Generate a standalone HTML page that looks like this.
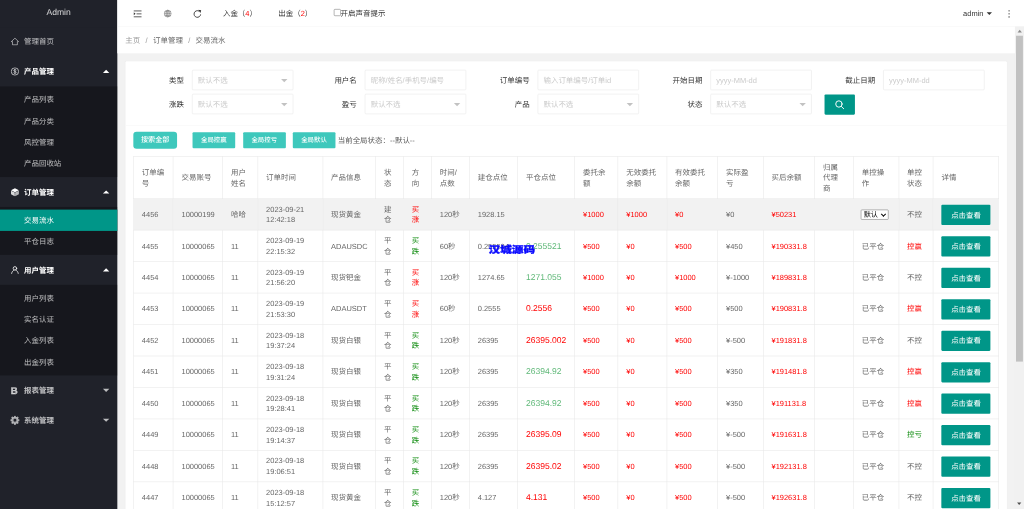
<!DOCTYPE html>
<html lang="zh-CN">
<head>
<meta charset="utf-8">
<title>Admin</title>
<style>
*{box-sizing:border-box}
html,body{margin:0;padding:0;width:1024px;height:509px;overflow:hidden;background:#fff}
#root{position:absolute;left:0;top:0;width:1920px;height:955px;transform:scale(.5333333);transform-origin:0 0;mix-blend-mode:multiply;overflow:hidden;background:#f2f2f2;
 font:14px/20px "Liberation Sans","Noto Sans CJK SC",sans-serif;color:#666;text-rendering:geometricPrecision;-webkit-font-smoothing:antialiased}
/* ---------- sidebar ---------- */
#side{position:absolute;left:0;top:0;width:220px;height:955px;background:#20222a;color:#fff}
#logo{height:50px;line-height:50px;padding-top:0;text-align:center;font-size:16px;font-weight:300;color:rgba(255,255,255,.8);box-shadow:0 1px 2px 0 rgba(0,0,0,.15)}
.ni{position:relative;height:56px;line-height:56px;padding-left:45px;color:rgba(255,255,255,.7)}
.ni.on{color:#fff}
.ni.bd{font-weight:bold}
.ni svg,.ni b.ic{position:absolute;left:20px;top:20px;width:16px;height:16px}
.ni b.ic{top:0;font-size:18px;font-weight:bold;line-height:56px;left:20px;width:auto;height:auto;-webkit-text-stroke:.6px currentColor}
.ni i{position:absolute;right:15px;top:50%;width:0;height:0;border:6px solid transparent}
.ni i.dn{margin-top:-3px;border-top-color:rgba(255,255,255,.7)}
.ni i.up{margin-top:-9px;border-bottom-color:#fff}
.ch{background:rgba(0,0,0,.3);padding:5px 0}
.ch div{height:40px;line-height:40px;padding-left:45px;color:rgba(255,255,255,.7)}
.ch div.this{background:#009688;color:#fff}
/* ---------- header ---------- */
#hd{position:absolute;left:220px;top:0;width:1700px;height:50px;background:#fff;border-bottom:1px solid #f6f6f6;color:#333;line-height:50px}
#hd .it{position:absolute;top:0;height:50px;white-space:nowrap}
#hd svg{position:absolute;top:17.7px;width:16px;height:16px}
.red{color:#ff0000}
/* ---------- content ---------- */
#bc{position:absolute;left:220px;top:50px;width:1683px;height:50px;background:#fff;line-height:50px;padding-left:15px;color:#666;white-space:nowrap}
#bc span.a{color:#999}
#bc span.s{color:#999;margin:0 10px}
#sb{position:absolute;left:1903px;top:50px;width:17px;height:904.4px;background:#f1f1f1}
#sb .th{position:absolute;left:2px;top:17px;width:13px;height:611px;background:#c1c1c1}
#sb .au,#sb .ad{position:absolute;left:4.5px;width:0;height:0;border:4px solid transparent}
#sb .au{top:1.5px;border-bottom:5px solid #8a8a8a}
#sb .ad{bottom:3px;left:4.2px;border-top:5px solid #505050}
#card{position:absolute;left:235px;top:115px;width:1653px;height:900px;background:#fff;border-radius:2px;box-shadow:0 1px 2px 0 rgba(0,0,0,.05)}
#fh{position:absolute;left:0;top:0;width:1653px;height:121px;border-bottom:1px solid #f6f6f6;color:#333}
.lb{position:absolute;width:110px;height:38px;line-height:38px;text-align:right;padding-right:15px;white-space:nowrap}
.inp{position:absolute;width:190px;height:38px;border:1px solid #e6e6e6;border-radius:2px;background:#fff;line-height:36px;padding-left:10px;color:#cacaca;white-space:nowrap}
.inp i{position:absolute;right:10px;top:16px;width:0;height:0;border:6px solid transparent;border-top-color:#c2c2c2}
.sbtn{position:absolute;left:1311px;top:62px;width:57px;height:38px;background:#009688;border-radius:2px}
.sbtn svg{position:absolute;left:19px;top:10px;width:19px;height:19px}
.b1,.b2{font-weight:500;position:absolute;color:#fff;text-align:center;white-space:nowrap;background:#3ec8bc}
.b1{left:15px;top:132px;width:82px;height:32px;line-height:32px;border-radius:6px;font-size:13.333px}
.b2{top:133px;width:80px;height:30px;line-height:30px;border-radius:2px;font-size:12px}
#gs{position:absolute;left:398.2px;top:133px;height:30px;line-height:30px;color:#5a5a5a;white-space:nowrap}
/* ---------- table ---------- */
.tb{position:absolute;left:15px;top:178px;width:1622.3px;table-layout:fixed;border-collapse:collapse;border-spacing:0;color:#666;background:#fff}
.tb th,.tb td{border:1px solid #e6e6e6;padding:9px 15px;line-height:20px;font-size:14px;font-weight:400;text-align:left;vertical-align:middle;overflow:hidden;white-space:nowrap}
.tb tr{height:59px}
.tb tr:first-child{height:79px}
.tb tr.hov td{background:#f2f2f2}
.cr{color:#ff0000}
.cg2{color:#0f8c0f}
.cp{font-size:16px !important}
.cp span{position:relative;top:1px}
.pr{color:#ff0000}
.pg{color:#5fb878}
.btn{position:relative;top:1px;display:inline-block;width:92px;height:38px;line-height:38px;background:#009688;color:#fff;text-align:center;border-radius:2px;vertical-align:middle}
.sel{margin-left:-1.3px;display:inline-block;position:relative;width:52px;height:19px;border:1px solid #767676;border-radius:2px;background:#fff;color:#000;font-size:13.333px;line-height:17px;padding-left:4px;vertical-align:middle}
.sel i{position:absolute;right:5.5px;top:3.2px;width:7px;height:7px;border-right:2.3px solid #111;border-bottom:2.3px solid #111;transform:rotate(45deg)}
#wm{-webkit-text-stroke:.7px #0a0aff;position:absolute;left:916px;top:454.5px;font-size:18px;line-height:28px;font-weight:900;color:#0a0aff;white-space:nowrap;transform:scaleX(1.21);transform-origin:0 0}
</style>
</head>
<body>
<div id="root">

<!-- sidebar -->
<div id="side">
 <div id="logo">Admin</div>
 <div class="ni"><svg viewBox="0 0 16 16" fill="none" stroke="currentColor" stroke-width="1.4" stroke-linejoin="round"><path d="M1.2 8 8 1.6 14.8 8H12.6v6H3.4V8z"/></svg>管理首页</div>
 <div class="ni on bd"><svg viewBox="0 0 16 16" fill="none" stroke="currentColor" stroke-width="1.2"><circle cx="8" cy="8" r="6.9"/><path d="M10.3 5.9C10 5 9.100 4.600 8 4.600 6.800 4.600 5.800 5.200 5.800 6.200 5.800 8.300 10.300 7.400 10.300 9.700 10.300 10.800 9.300 11.400 8 11.400 6.700 11.400 5.800 10.900 5.600 10M8 3.400V12.600" stroke-width="1.1"/></svg>产品管理<i class="up"></i></div>
 <div class="ch"><div>产品列表</div><div>产品分类</div><div>风控管理</div><div>产品回收站</div></div>
 <div class="ni on bd"><svg style="top:19.500px;height:17px" viewBox="0 0 16 17" fill="currentColor"><path d="M8 0.800 15.400 4.600 8 8.400 0.600 4.600z"/><path d="M0.600 5.500 7.650 9.100V16.200L0.600 12.400z" opacity=".82"/><path d="M15.400 5.500 8.350 9.100V16.200L15.400 12.400z" opacity=".68"/></svg>订单管理<i class="up"></i></div>
 <div class="ch"><div class="this">交易流水</div><div>平仓日志</div></div>
 <div class="ni on bd"><svg viewBox="0 0 16 16" fill="none" stroke="currentColor" stroke-width="1.5" stroke-linecap="round"><circle cx="8" cy="5.200" r="3.300"/><path d="M1.800 14.600C2.300 11.500 4.500 9.300 6.300 8.400M14.200 14.600C13.700 11.500 11.500 9.300 9.700 8.400"/></svg>用户管理<i class="up"></i></div>
 <div class="ch"><div>用户列表</div><div>实名认证</div><div>入金列表</div><div>出金列表</div></div>
 <div class="ni bd"><b class="ic">B</b>报表管理<i class="dn"></i></div>
 <div class="ni bd"><svg style="left:19px;top:19px;width:18px;height:18px;opacity:.8" viewBox="0 0 16 16" fill="currentColor"><path fill-rule="evenodd" d="M8 2.200a5.800 5.800 0 1 0 0 11.600 5.800 5.800 0 0 0 0-11.600zM8 5.600a2.400 2.400 0 1 1 0 4.800 2.400 2.400 0 0 1 0-4.800z"/><rect x="6.4" y="0.3" width="3.2" height="3.4" rx=".6" transform="rotate(0 8 8)"/><rect x="6.4" y="0.3" width="3.2" height="3.4" rx=".6" transform="rotate(45 8 8)"/><rect x="6.4" y="0.3" width="3.2" height="3.4" rx=".6" transform="rotate(90 8 8)"/><rect x="6.4" y="0.3" width="3.2" height="3.4" rx=".6" transform="rotate(135 8 8)"/><rect x="6.4" y="0.3" width="3.2" height="3.4" rx=".6" transform="rotate(180 8 8)"/><rect x="6.4" y="0.3" width="3.2" height="3.4" rx=".6" transform="rotate(225 8 8)"/><rect x="6.4" y="0.3" width="3.2" height="3.4" rx=".6" transform="rotate(270 8 8)"/><rect x="6.4" y="0.3" width="3.2" height="3.4" rx=".6" transform="rotate(315 8 8)"/></svg>系统管理<i class="dn"></i></div>
</div>

<!-- header -->
<div id="hd">
 <svg style="left:30px" viewBox="0 0 16 16" fill="none" stroke="#333" stroke-width="1.5"><path d="M0.500 2.500H15.500M6 8H15.500M0.500 13.500H15.500"/><path d="M0.700 5.200 4.200 8 0.700 10.800z" fill="#333" stroke="none"/></svg>
 <svg style="left:86.500px;width:15px;height:15px;top:18.200px" viewBox="0 0 16 16" fill="none" stroke="#555" stroke-width=".9"><circle cx="8" cy="8" r="7"/><ellipse cx="8" cy="8" rx="3.200" ry="7"/><path d="M1 8H15M2 4.500H14M2 11.500H14M8 1V15"/></svg>
 <svg style="left:142px" viewBox="0 0 16 16" fill="none" stroke="#333" stroke-width="1.7"><path d="M14.200 9A6.200 6.200 0 1 1 11 2.800"/><path d="M9.500 0.200 15.300 1.200 13.800 6.600z" fill="#333" stroke="none"/></svg>
 <div class="it" style="left:198px">入金（<span class="red">4</span>）</div>
 <div class="it" style="left:301.800px">出金（<span class="red">2</span>）</div>
 <div class="it" style="left:405.600px"><span style="display:inline-block;width:13px;height:13px;border:1px solid #767676;border-radius:2px;background:#fff;vertical-align:middle;margin:-5px 0 0 0"></span>开启声音提示</div>
 <div class="it" style="right:76px">admin</div>
 <i style="position:absolute;left:1630px;top:23px;width:0;height:0;border:5px solid transparent;border-top-color:#333"></i>
 <svg style="left:1664px" viewBox="0 0 16 16" fill="#333"><circle cx="8" cy="2.300" r="1.300"/><circle cx="8" cy="8" r="1.300"/><circle cx="8" cy="13.700" r="1.300"/></svg>
</div>

<!-- breadcrumb -->
<div id="bc"><span class="a">主页</span><span class="s">/</span><span>订单管理</span><span class="s">/</span><span>交易流水</span></div>

<!-- scrollbar -->
<div id="sb"><div class="au"></div><div class="th"></div><div class="ad"></div></div>

<!-- card -->
<div id="card">
 <div id="fh">
  <div class="lb" style="left:15px;top:16px">类型</div><div class="inp" style="left:125px;top:16px">默认不选<i></i></div>
  <div class="lb" style="left:339px;top:16px">用户名</div><div class="inp" style="left:449px;top:16px">昵称/姓名/手机号/编号</div>
  <div class="lb" style="left:663px;top:16px">订单编号</div><div class="inp" style="left:773px;top:16px">输入订单编号/订单id</div>
  <div class="lb" style="left:987px;top:16px">开始日期</div><div class="inp" style="left:1097px;top:16px">yyyy-MM-dd</div>
  <div class="lb" style="left:1311px;top:16px">截止日期</div><div class="inp" style="left:1421px;top:16px">yyyy-MM-dd</div>
  <div class="lb" style="left:15px;top:61px">涨跌</div><div class="inp" style="left:125px;top:61px">默认不选<i></i></div>
  <div class="lb" style="left:339px;top:61px">盈亏</div><div class="inp" style="left:449px;top:61px">默认不选<i></i></div>
  <div class="lb" style="left:663px;top:61px">产品</div><div class="inp" style="left:773px;top:61px">默认不选<i></i></div>
  <div class="lb" style="left:987px;top:61px">状态</div><div class="inp" style="left:1097px;top:61px">默认不选<i></i></div>
  <div class="sbtn"><svg viewBox="0 0 19 19" fill="none" stroke="#fff" stroke-width="1.8" stroke-linecap="round"><circle cx="8" cy="8" r="6"/><path d="M12.600 12.600 17 17"/></svg></div>
 </div>
 <div class="b1">搜索全部</div>
 <div class="b2" style="left:126px">全局控赢</div>
 <div class="b2" style="left:220.500px">全局控亏</div>
 <div class="b2" style="left:313.800px">全局默认</div>
 <div id="gs">当前全局状态：--默认--</div>
<table class="tb"><colgroup><col style="width:74.3px"><col style="width:92.8px"><col style="width:65.8px"><col style="width:121.8px"><col style="width:99.3px"><col style="width:52px"><col style="width:52.6px"><col style="width:71.2px"><col style="width:90.5px"><col style="width:106.9px"><col style="width:81.1px"><col style="width:91.4px"><col style="width:95.6px"><col style="width:85.3px"><col style="width:96.6px"><col style="width:72.6px"><col style="width:84.9px"><col style="width:64.8px"><col style="width:122.8px"></colgroup>
<tr><th>订单编<br>号</th><th>交易账号</th><th>用户<br>姓名</th><th>订单时间</th><th>产品信息</th><th>状<br>态</th><th>方<br>向</th><th>时间/<br>点数</th><th>建仓点位</th><th>平仓点位</th><th>委托余<br>额</th><th>无效委托<br>余额</th><th>有效委托<br>余额</th><th>实际盈<br>亏</th><th>买后余额</th><th>归属<br>代理<br>商</th><th>单控操<br>作</th><th>单控<br>状态</th><th>详情</th></tr>
<tr class="hov"><td>4456</td><td>10000199</td><td>哈哈</td><td>2023-09-21<br>12:42:18</td><td>现货黄金</td><td>建<br>仓</td><td class="cr">买<br>涨</td><td>120秒</td><td>1928.15</td><td class="cp "><span></span></td><td class="cr">¥1000</td><td class="cr">¥1000</td><td class="cr">¥0</td><td>¥0</td><td class="cr">¥50231</td><td></td><td><span class="sel">默认<i></i></span></td><td>不控</td><td><span class="btn">点击查看</span></td></tr>
<tr><td>4455</td><td>10000065</td><td>11</td><td>2023-09-19<br>22:15:32</td><td>ADAUSDC</td><td>平<br>仓</td><td class="cg2">买<br>跌</td><td>60秒</td><td>0.255584</td><td class="cp pg"><span>0.255521</span></td><td class="cr">¥500</td><td class="cr">¥0</td><td class="cr">¥500</td><td>¥450</td><td class="cr">¥190331.8</td><td></td><td>已平仓</td><td class="cr">控赢</td><td><span class="btn">点击查看</span></td></tr>
<tr><td>4454</td><td>10000065</td><td>11</td><td>2023-09-19<br>21:56:20</td><td>现货钯金</td><td>平<br>仓</td><td class="cr">买<br>涨</td><td>120秒</td><td>1274.65</td><td class="cp pg"><span>1271.055</span></td><td class="cr">¥1000</td><td class="cr">¥0</td><td class="cr">¥1000</td><td>¥-1000</td><td class="cr">¥189831.8</td><td></td><td>已平仓</td><td>不控</td><td><span class="btn">点击查看</span></td></tr>
<tr><td>4453</td><td>10000065</td><td>11</td><td>2023-09-19<br>21:53:30</td><td>ADAUSDT</td><td>平<br>仓</td><td class="cr">买<br>涨</td><td>60秒</td><td>0.2555</td><td class="cp pr"><span>0.2556</span></td><td class="cr">¥500</td><td class="cr">¥0</td><td class="cr">¥500</td><td>¥500</td><td class="cr">¥190831.8</td><td></td><td>已平仓</td><td class="cr">控赢</td><td><span class="btn">点击查看</span></td></tr>
<tr><td>4452</td><td>10000065</td><td>11</td><td>2023-09-18<br>19:37:24</td><td>现货白银</td><td>平<br>仓</td><td class="cg2">买<br>跌</td><td>120秒</td><td>26395</td><td class="cp pr"><span>26395.002</span></td><td class="cr">¥500</td><td class="cr">¥0</td><td class="cr">¥500</td><td>¥-500</td><td class="cr">¥191831.8</td><td></td><td>已平仓</td><td>不控</td><td><span class="btn">点击查看</span></td></tr>
<tr><td>4451</td><td>10000065</td><td>11</td><td>2023-09-18<br>19:31:24</td><td>现货白银</td><td>平<br>仓</td><td class="cg2">买<br>跌</td><td>120秒</td><td>26395</td><td class="cp pg"><span>26394.92</span></td><td class="cr">¥500</td><td class="cr">¥0</td><td class="cr">¥500</td><td>¥350</td><td class="cr">¥191481.8</td><td></td><td>已平仓</td><td class="cr">控赢</td><td><span class="btn">点击查看</span></td></tr>
<tr><td>4450</td><td>10000065</td><td>11</td><td>2023-09-18<br>19:28:41</td><td>现货白银</td><td>平<br>仓</td><td class="cg2">买<br>跌</td><td>120秒</td><td>26395</td><td class="cp pg"><span>26394.92</span></td><td class="cr">¥500</td><td class="cr">¥0</td><td class="cr">¥500</td><td>¥350</td><td class="cr">¥191131.8</td><td></td><td>已平仓</td><td class="cr">控赢</td><td><span class="btn">点击查看</span></td></tr>
<tr><td>4449</td><td>10000065</td><td>11</td><td>2023-09-18<br>19:14:37</td><td>现货白银</td><td>平<br>仓</td><td class="cg2">买<br>跌</td><td>120秒</td><td>26395</td><td class="cp pr"><span>26395.09</span></td><td class="cr">¥500</td><td class="cr">¥0</td><td class="cr">¥500</td><td>¥-500</td><td class="cr">¥191631.8</td><td></td><td>已平仓</td><td class="cg2">控亏</td><td><span class="btn">点击查看</span></td></tr>
<tr><td>4448</td><td>10000065</td><td>11</td><td>2023-09-18<br>19:06:51</td><td>现货白银</td><td>平<br>仓</td><td class="cg2">买<br>跌</td><td>120秒</td><td>26395</td><td class="cp pr"><span>26395.02</span></td><td class="cr">¥500</td><td class="cr">¥0</td><td class="cr">¥500</td><td>¥-500</td><td class="cr">¥192131.8</td><td></td><td>已平仓</td><td>不控</td><td><span class="btn">点击查看</span></td></tr>
<tr><td>4447</td><td>10000065</td><td>11</td><td>2023-09-18<br>15:12:57</td><td>现货黄金</td><td>平<br>仓</td><td class="cg2">买<br>跌</td><td>120秒</td><td>4.127</td><td class="cp pr"><span>4.131</span></td><td class="cr">¥500</td><td class="cr">¥0</td><td class="cr">¥500</td><td>¥-500</td><td class="cr">¥192631.8</td><td></td><td>已平仓</td><td>不控</td><td><span class="btn">点击查看</span></td></tr>
</table>
</div>

<div id="wm">汉城源码</div>

</div>
</body>
</html>
